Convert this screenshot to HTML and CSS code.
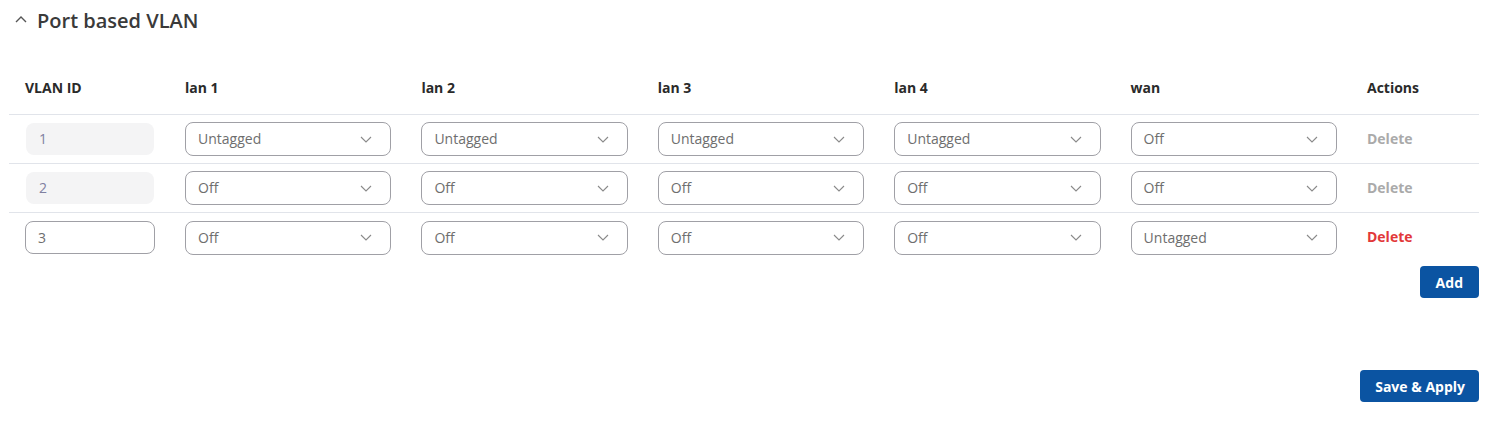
FILE: index.html
```html
<!DOCTYPE html>
<html lang="en">
<head>
<meta charset="utf-8">
<title>Port based VLAN</title>
<link rel="stylesheet" href="styles.css">
</head>
<body>
<div class="page">
  <div class="section-head">
    <svg class="collapse" width="12" height="7" viewBox="0 0 12 7"><path d="M1 6 L6 1 L11 6" fill="none" stroke="#555" stroke-width="1.4"/></svg>
    <h2 class="title">Port based VLAN</h2>
  </div>

  <div class="vtable">
    <div class="vrow vhead">
      <div class="cell">VLAN ID</div>
      <div class="cell">lan 1</div>
      <div class="cell">lan 2</div>
      <div class="cell">lan 3</div>
      <div class="cell">lan 4</div>
      <div class="cell">wan</div>
      <div class="cell">Actions</div>
    </div>

    <div class="vrow">
      <div class="cell"><div class="inp disabled">1</div></div>
      <div class="cell"><div class="sel"><span>Untagged</span><svg width="12" height="7" viewBox="0 0 12 7"><path d="M1 1 L6 6 L11 1" fill="none" stroke="#8a8a8a" stroke-width="1.1"/></svg></div></div>
      <div class="cell"><div class="sel"><span>Untagged</span><svg width="12" height="7" viewBox="0 0 12 7"><path d="M1 1 L6 6 L11 1" fill="none" stroke="#8a8a8a" stroke-width="1.1"/></svg></div></div>
      <div class="cell"><div class="sel"><span>Untagged</span><svg width="12" height="7" viewBox="0 0 12 7"><path d="M1 1 L6 6 L11 1" fill="none" stroke="#8a8a8a" stroke-width="1.1"/></svg></div></div>
      <div class="cell"><div class="sel"><span>Untagged</span><svg width="12" height="7" viewBox="0 0 12 7"><path d="M1 1 L6 6 L11 1" fill="none" stroke="#8a8a8a" stroke-width="1.1"/></svg></div></div>
      <div class="cell"><div class="sel"><span>Off</span><svg width="12" height="7" viewBox="0 0 12 7"><path d="M1 1 L6 6 L11 1" fill="none" stroke="#8a8a8a" stroke-width="1.1"/></svg></div></div>
      <div class="cell"><span class="del off">Delete</span></div>
    </div>

    <div class="vrow">
      <div class="cell"><div class="inp disabled">2</div></div>
      <div class="cell"><div class="sel"><span>Off</span><svg width="12" height="7" viewBox="0 0 12 7"><path d="M1 1 L6 6 L11 1" fill="none" stroke="#8a8a8a" stroke-width="1.1"/></svg></div></div>
      <div class="cell"><div class="sel"><span>Off</span><svg width="12" height="7" viewBox="0 0 12 7"><path d="M1 1 L6 6 L11 1" fill="none" stroke="#8a8a8a" stroke-width="1.1"/></svg></div></div>
      <div class="cell"><div class="sel"><span>Off</span><svg width="12" height="7" viewBox="0 0 12 7"><path d="M1 1 L6 6 L11 1" fill="none" stroke="#8a8a8a" stroke-width="1.1"/></svg></div></div>
      <div class="cell"><div class="sel"><span>Off</span><svg width="12" height="7" viewBox="0 0 12 7"><path d="M1 1 L6 6 L11 1" fill="none" stroke="#8a8a8a" stroke-width="1.1"/></svg></div></div>
      <div class="cell"><div class="sel"><span>Off</span><svg width="12" height="7" viewBox="0 0 12 7"><path d="M1 1 L6 6 L11 1" fill="none" stroke="#8a8a8a" stroke-width="1.1"/></svg></div></div>
      <div class="cell"><span class="del off">Delete</span></div>
    </div>

    <div class="vrow last">
      <div class="cell"><div class="inp">3</div></div>
      <div class="cell"><div class="sel"><span>Off</span><svg width="12" height="7" viewBox="0 0 12 7"><path d="M1 1 L6 6 L11 1" fill="none" stroke="#8a8a8a" stroke-width="1.1"/></svg></div></div>
      <div class="cell"><div class="sel"><span>Off</span><svg width="12" height="7" viewBox="0 0 12 7"><path d="M1 1 L6 6 L11 1" fill="none" stroke="#8a8a8a" stroke-width="1.1"/></svg></div></div>
      <div class="cell"><div class="sel"><span>Off</span><svg width="12" height="7" viewBox="0 0 12 7"><path d="M1 1 L6 6 L11 1" fill="none" stroke="#8a8a8a" stroke-width="1.1"/></svg></div></div>
      <div class="cell"><div class="sel"><span>Off</span><svg width="12" height="7" viewBox="0 0 12 7"><path d="M1 1 L6 6 L11 1" fill="none" stroke="#8a8a8a" stroke-width="1.1"/></svg></div></div>
      <div class="cell"><div class="sel"><span>Untagged</span><svg width="12" height="7" viewBox="0 0 12 7"><path d="M1 1 L6 6 L11 1" fill="none" stroke="#8a8a8a" stroke-width="1.1"/></svg></div></div>
      <div class="cell"><span class="del">Delete</span></div>
    </div>
  </div>

  <div class="actions-add">
    <button class="btn">Add</button>
  </div>
  <div class="actions-save">
    <button class="btn btn-save">Save &amp; Apply</button>
  </div>
</div>
</body>
</html>
```

FILE: styles.css
```css
* { box-sizing: border-box; }
html, body { margin: 0; padding: 0; background: #fff; }
body {
  font-family: "Open Sans", "Noto Sans", sans-serif;
  font-size: 14px;
  color: #333;
}
.page {
  width: 1498px;
  padding: 7px 19px 0 9px;
}
.section-head {
  display: flex;
  align-items: center;
  height: 27px;
}
.collapse {
  margin-left: 6px;
  margin-right: 10px;
  margin-top: -2px;
}
.title {
  margin: 0;
  font-size: 20px;
  line-height: 27px;
  font-weight: 600;
  color: #3a3a3a;
}
.vtable {
  margin-top: 28px;
}
.vrow {
  display: grid;
  grid-template-columns: 160px 1fr 1fr 1fr 1fr 1fr 128px;
  height: 49px;
  border-bottom: 1px solid #e1e4ea;
  align-items: center;
}
.vrow.vhead {
  height: 53px;
  padding-bottom: 2px;
}
.vrow.last {
  border-bottom: none;
}
.cell {
  padding: 0 14px 0 16px;
  line-height: 19px;
}
.vhead .cell {
  font-weight: 700;
  color: #2a2a2a;
  font-size: 14px;
}
.inp {
  height: 33px;
  width: 130px;
  border: 1px solid #a0a0a6;
  border-radius: 8px;
  padding: 0 12px 1px;
  display: flex;
  align-items: center;
  color: #6e6e6e;
}
.inp.disabled {
  border-color: transparent;
  background: #f4f4f5;
  height: 32px;
  width: 128px;
  margin-left: 1px;
  color: #8080a0;
}
.sel {
  height: 34px;
  border: 1px solid #a0a0a6;
  border-radius: 8px;
  padding: 0 18px 1px 12px;
  display: flex;
  align-items: center;
  justify-content: space-between;
  color: #6e6e6e;
}
.sel svg { display: block; margin-top: 1px; }
.del {
  font-weight: 700;
  color: #e2383a;
  position: relative;
  top: -1px;
}
.del.off { color: #aaaaaa; }
.actions-add {
  display: flex;
  justify-content: flex-end;
  margin-top: 4px;
}
.actions-save {
  display: flex;
  justify-content: flex-end;
  margin-top: 72px;
}
.btn {
  font-family: "Open Sans", "Noto Sans", sans-serif;
  font-size: 14px;
  font-weight: 700;
  color: #fff;
  background: #0b54a2;
  border: none;
  border-radius: 4px;
  height: 32px;
  padding: 0 16px;
}
.btn-save {
  padding: 0 14px 0 15px;
}
```
